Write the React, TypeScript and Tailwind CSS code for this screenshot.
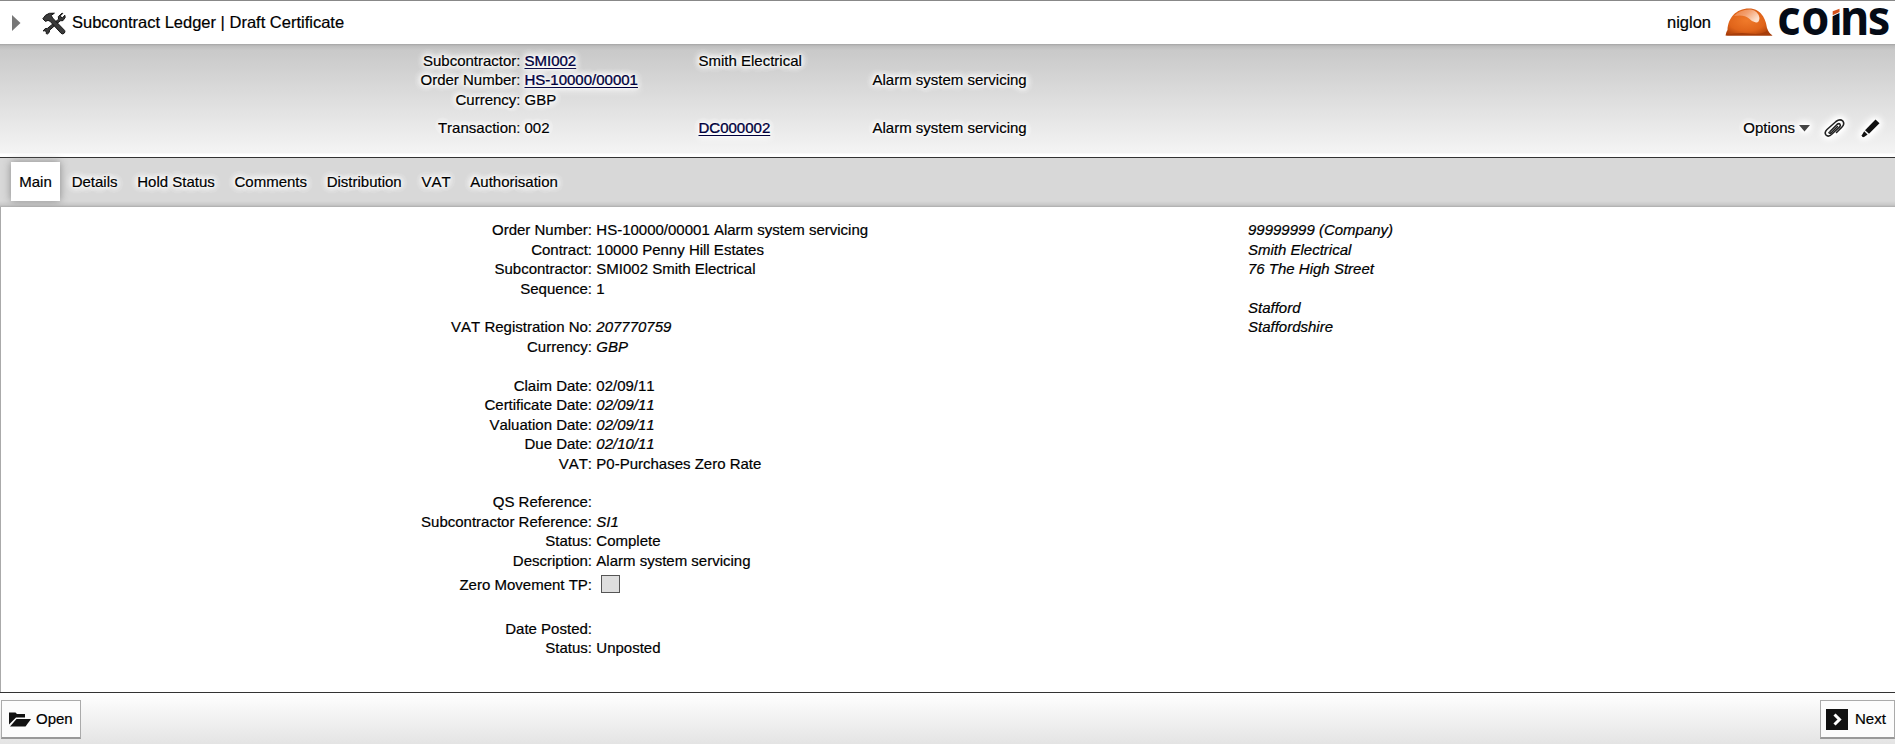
import React from "react";

const halo =
  "[text-shadow:0_0_2px_#fff,0_0_4px_#fff,0_0_6px_#fff,0_0_8px_#fff,0_0_9px_#fff,0_0_10px_#fff,0_0_11px_#fff]";
const iconHalo =
  "[filter:drop-shadow(0_0_1px_#fff)_drop-shadow(0_0_2px_#fff)_drop-shadow(0_0_3px_#fff)_drop-shadow(0_0_3px_#fff)]";

type Row = { label: string; value?: string; italic?: boolean };

const groups: Row[][] = [
  [
    { label: "Order Number", value: "HS-10000/00001 Alarm system servicing" },
    { label: "Contract", value: "10000 Penny Hill Estates" },
    { label: "Subcontractor", value: "SMI002 Smith Electrical" },
    { label: "Sequence", value: "1" },
  ],
  [
    { label: "VAT Registration No", value: "207770759", italic: true },
    { label: "Currency", value: "GBP", italic: true },
  ],
  [
    { label: "Claim Date", value: "02/09/11" },
    { label: "Certificate Date", value: "02/09/11", italic: true },
    { label: "Valuation Date", value: "02/09/11", italic: true },
    { label: "Due Date", value: "02/10/11", italic: true },
    { label: "VAT", value: "P0-Purchases Zero Rate" },
  ],
  [
    { label: "QS Reference" },
    { label: "Subcontractor Reference", value: "SI1", italic: true },
    { label: "Status", value: "Complete" },
    { label: "Description", value: "Alarm system servicing" },
  ],
];

const tabs = ["Details", "Hold Status", "Comments", "Distribution", "VAT", "Authorisation"];

function ToolsIcon() {
  return (
    <svg width="24" height="23" viewBox="0 0 24 23" fill="#3a3a3a" stroke="#151515" strokeWidth="1">
      <path d="M20 1.2 16.3 4.6 16.6 7.2 5.4 16.4 3.2 16.6 1.2 19 2.6 18.800 4.400 19.600 4.200 21.600 5.400 22 7.200 20.4 7.6 18.2 18.2 8.8 21 8.6 23.2 5.4 22.8 3.2 20.6 5.8 18.8 5.2 18.6 3.6 20.8 1.4Z" />
      <path d="M.8 6.8 3.6 3.2Q7 .4 12.4 1.2L9.2 3.4 10.6 6 22.6 18.4Q23.6 20 22 21.4 20.4 22.6 19 21.2L8 9.2 6 8.4 3.4 9.4Z" />
    </svg>
  );
}

function Logo() {
  return (
    <svg className="overflow-visible" width="166" height="32" viewBox="0 0 166 32">
      <defs>
        <radialGradient id="helmet" cx="0.45" cy="0.45" r="0.65">
          <stop offset="0" stopColor="#f07a2a" />
          <stop offset="0.6" stopColor="#e0641a" />
          <stop offset="1" stopColor="#a83c08" />
        </radialGradient>
        <linearGradient id="shine" x1="0" y1="0" x2="1" y2="0.6">
          <stop offset="0" stopColor="#ec7c38" />
          <stop offset="0.5" stopColor="#f3a070" />
          <stop offset="1" stopColor="#fde0cc" />
        </linearGradient>
      </defs>
      <path d="M2.500 23C3 11 11 1.500 24 1.500 36 1.500 41 12 42 21Q44 26.500 47.500 28.500H.5Q1 25 2.500 23Z" fill="url(#helmet)" />
      <path d="M9 9Q15 2 26 2.500 33 3.500 34.500 11 34 16 31 15.500 27 15 24 11.500 19 7 9 9Z" fill="url(#shine)" />
      <path d="M.5 28.500Q12 25 24 26.500 38 28 42 23.500 44 27 47.500 28.500Z" fill="#a63d0a" />
      <text
        transform="scale(0.94 1)"
        x="55.6 81 110.900 122.4 151.8"
        y="28.200"
        fontFamily="'Noto Sans', 'Open Sans', sans-serif"
        fontWeight="700"
        fontSize="48"
        strokeWidth="0"
        fill="#050b16"
      >
        coıns
      </text>
      <path d="M106 0H116.500V5L106 10Z" fill="#fff" />
      <path d="M107.700 4.300 114.500 1.800V5L107.700 8.200Z" fill="#d4521c" />
    </svg>
  );
}

function Field({ label, value, italic }: Row) {
  return (
    <div className="grid h-[19.44px] grid-cols-[592px_1fr] gap-[4.3px] leading-[19.44px]">
      <span className="text-right">{label}:</span>
      <span className={italic ? "italic" : ""}>{value}</span>
    </div>
  );
}

const headerRow =
  "grid grid-cols-[520.5px_170px_170px_1fr] gap-x-[4px] h-[19.4px] leading-[19.4px]";
const link = "text-[#00003c] underline underline-offset-2";

export default function App() {
  return (
    <div className="flex h-[744px] w-[1895px] flex-col overflow-hidden bg-white font-['Liberation_Sans',Arial,sans-serif] text-[15px] text-black [-webkit-text-stroke:0.2px] [font-kerning:none]">
      <header className="flex h-[44px] shrink-0 items-center border-t border-[#888] bg-white text-[16.5px]">
        <svg className="ml-3 mt-px" width="9" height="16" viewBox="0 0 9 16">
          <path d="M0 0 8.500 8 0 16Z" fill="#777" />
        </svg>
        <div className="ml-[21px] mt-0.5">
          <ToolsIcon />
        </div>
        <h1 className="ml-[6px]">Subcontract Ledger | Draft Certificate</h1>
        <span className="ml-auto">niglon</span>
        <div className="ml-[14px] mr-[4px]">
          <Logo />
        </div>
      </header>

      <section className="flex h-[114px] shrink-0 flex-col border-b border-[#333] bg-[linear-gradient(#a4a4a4,#bdbdbd_2px,#c9c9c9_6px,#f4f4f4_109px,#fff_110px)] pt-[7px]">
        <div className={`${headerRow} ${halo}`}>
          <span className="text-right">Subcontractor:</span>
          <a className={link}>SMI002</a>
          <span>Smith Electrical</span>
        </div>
        <div className={`${headerRow} ${halo}`}>
          <span className="text-right">Order Number:</span>
          <a className={link}>HS-10000/00001</a>
          <span />
          <span>Alarm system servicing</span>
        </div>
        <div className={`${headerRow} ${halo}`}>
          <span className="text-right">Currency:</span>
          <span>GBP</span>
        </div>
        <div className="mt-[9px] flex">
          <div className={`${headerRow} ${halo} grow`}>
            <span className="text-right">Transaction:</span>
            <span>002</span>
            <a className={link}>DC000002</a>
            <span>Alarm system servicing</span>
          </div>
          <div className="mr-[15px] flex h-5 items-center pt-px">
            <span className={halo}>Options</span>
            <svg className={`ml-1 ${iconHalo}`} width="11" height="7" viewBox="0 0 11 7">
              <path d="M0 0H11L5.500 6.500Z" fill="#444" />
            </svg>
            <svg className={`ml-[14px] ${iconHalo} overflow-visible`} width="21" height="19" viewBox="0 0 21 19" fill="none" stroke="#222" strokeWidth="1.6" strokeLinecap="round">
              <path d="M6 12.500 13 5.500Q15 4 16 5.200 17 6.500 15.500 8L8 15Q4.500 18.500 2 16 0 13.500 3 10.500L12 2.500Q16 -.5 18.800 2 21 5 18 8L12.500 13.500" />
              <path d="M5 13.500Q5.500 15 7.500 13.500L13.500 7.500" />
            </svg>
            <svg className={`ml-[16px] ${iconHalo} overflow-visible`} width="19" height="19" viewBox="0 0 19 19" fill="#111">
              <path d="M14.500 .5 18.500 4.200 8 14.800 4 11.200Z" />
              <path d="M3.200 12.300 6.600 15.500 3.500 17.800Q1 19 .8 16.300Z" />
            </svg>
          </div>
        </div>
      </section>

      <nav className="flex h-[49px] shrink-0 items-start gap-[19.7px] bg-[linear-gradient(#d8d8d8_43px,#c8c8c8_47px,#acacac)] pl-[11px] pt-1 leading-[39px]">
        <span className="-mr-2 flex h-[39px] w-[49px] justify-center bg-white shadow-[0_0_8px_#888]">
          Main
        </span>
        {tabs.map((tab) => (
          <span key={tab} className={halo}>
            {tab}
          </span>
        ))}
      </nav>

      <main className="flex min-h-0 grow border-l border-[#aaa] bg-white">
        <div className="-ml-px w-[1248px] shrink-0 pt-[13.3px]">
          {groups.map((group, i) => (
            <div key={i} className="mb-[19.44px]">
              {group.map((row) => (
                <Field key={row.label} {...row} />
              ))}
            </div>
          ))}
          <div className="-mt-[19.44px] grid h-[29px] grid-cols-[592px_1fr] items-center gap-[4.3px] pt-0.5">
            <span className="text-right">Zero Movement TP:</span>
            <span className="-mt-1 ml-[5px] h-[18px] w-[19px] border border-[#555] bg-[#dedede]" />
          </div>
          <div className="mt-[19.8px]">
            <Field label="Date Posted" />
            <Field label="Status" value="Unposted" />
          </div>
        </div>
        <address className="pt-[13.3px] leading-[19.44px]">
          99999999 (Company)
          <br />
          Smith Electrical
          <br />
          76 The High Street
          <br />
          <br />
          Stafford
          <br />
          Staffordshire
        </address>
      </main>

      <footer className="flex h-[52px] shrink-0 items-start justify-between border-t border-[#333] bg-[linear-gradient(#fff,#e4e4e4)] pl-px pt-[7px]">
        <button className="flex h-[39px] w-[80px] items-center border border-b-2 border-[#aaa] border-b-[#999] bg-[#fcfcfc] pl-[7px]">
          <svg width="22" height="15" viewBox="0 0 22 15" fill="#111">
            <path d="M0 .5H6.500L8 2H16V5.500H7L0 12.500Z" />
            <path d="M7.500 7H22L16.500 14.500H1Z" />
          </svg>
          <span className="ml-[5px]">Open</span>
        </button>
        <button className="flex h-[39px] w-[75px] items-center border border-b-2 border-[#aaa] border-b-[#999] bg-[#fcfcfc] pl-[5px]">
          <svg width="22" height="21" viewBox="0 0 22 21">
            <path d="M0 0H22V21H0Z" fill="#111" />
            <path d="M8.500 5.500 13.500 10.500 8.500 15.500" fill="none" stroke="#fff" strokeWidth="3" />
          </svg>
          <span className="ml-[7px]">Next</span>
        </button>
      </footer>
    </div>
  );
}
